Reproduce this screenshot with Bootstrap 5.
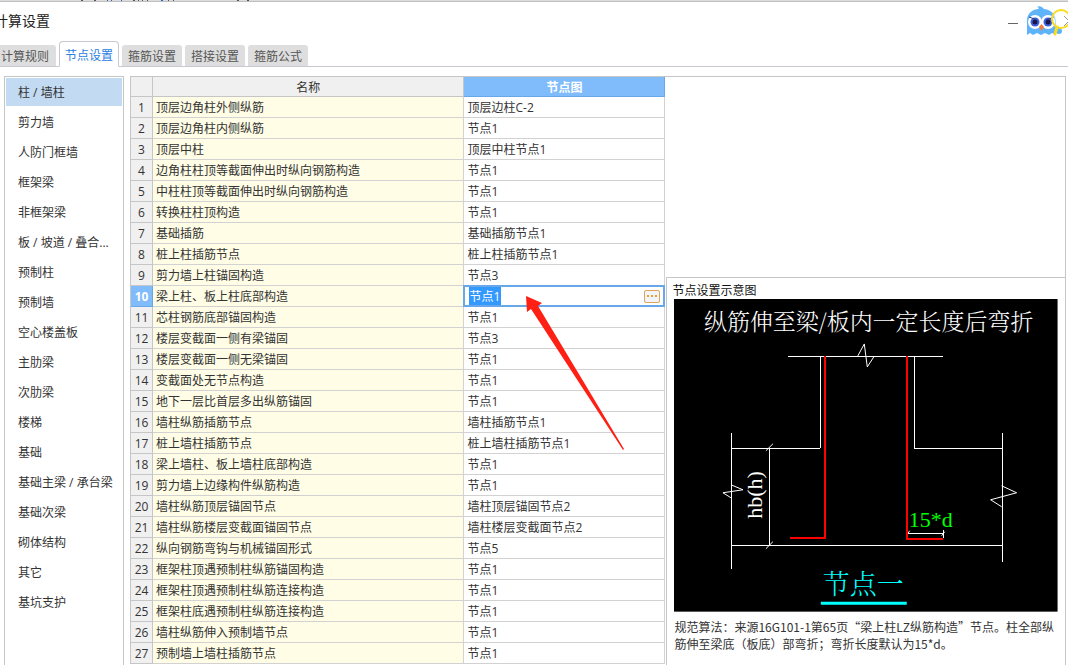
<!DOCTYPE html>
<html lang="zh-CN">
<head>
<meta charset="utf-8">
<meta name="viewport" content="width=device-width, initial-scale=1">
<title>计算设置</title>
<link href="https://cdn.jsdelivr.net/npm/bootstrap@5.3.0/dist/css/bootstrap.min.css" rel="stylesheet">
<style>
body { font-family: "Open Sans", "Noto Sans CJK SC", sans-serif; font-size: 12px; line-height: 17px; color: #333; background: #fff; }
.edge-strip { height: 2px; background: #dcdcdc; border-bottom: 1px solid #c0c0c0; }
.edge-strip svg { height: 1px; width: 260px; }
.title-bar { height: 39px; }
.title-bar h1 { font-size: 14px; line-height: 20px; margin: 0 0 2px -6px; font-weight: 400; color: #222; }
.min-btn { width: 10px; height: 10px; border: 0; padding: 0; background: none; }
.owl { width: 42px; height: 32px; }
.calc-tabs { height: 26px; border-bottom: 1px solid #c8c8d0; gap: 3px; }
.calc-tabs .nav-link { height: 21px; padding: 3px 6px 1px; border: 0; border-radius: 3px 3px 0 0; background: #dedede; color: #555; margin: 0; white-space: nowrap; }
.calc-tabs .nav-item:first-child .nav-link { padding-left: 1px; padding-right: 7px; border-top-left-radius: 0; }
.calc-tabs .nav-link.active { height: 26px; padding: 5px 5px 3px; border: 1px solid #c8c8d0; border-bottom-color: #fff; background: #fff; color: #2a7de1; margin-bottom: -1px; border-radius: 4px 4px 0 0; }
.work-area { padding: 9px 2px 0 4px; min-height: 0; }
.member-list { width: 120px; margin-right: 6px; padding: 1px; gap: 2px; border: 1px solid #c6c6c6; border-bottom: 0; }
.member-list a { height: 28px; padding: 6px 4px 5px 12px; color: #333; text-decoration: none; }
.member-list a.active { background: #c2daf2; }
.grid-pane { flex: 536 1 0; min-width: 0; }
.preview-pane { flex: 400 1 0; min-width: 0; border: 1px solid #c6c6c6; border-width: 1px 1px 0 0; }
.node-grid { width: 100%; table-layout: fixed; border-collapse: separate; border-spacing: 0; border: 1px solid #c6c6c6; border-width: 1px 0 0 1px; }
.node-grid th, .node-grid td { height: 21px; padding: 2px 3px 1px; border: 0 solid #d2d2d2; border-width: 0 1px 1px 0; white-space: nowrap; overflow: hidden; font-weight: 400; }
.node-grid thead th { height: 20px; padding: 2px 1px 0; background: #f0f0f0; text-align: center; border-color: #c6c6c6; }
.node-grid tbody th { background: #f0f0f0; text-align: center; padding-left: 0; padding-right: 0; border-color: #c6c6c6; }
.node-grid .item-name { background: #fffde6; }
.node-grid thead th.picked, .node-grid tbody th.picked { background: #80bcfb; border-color: #68a8ea; color: #fff; font-weight: 700; }
.node-grid td.edit-cell { overflow: visible; padding: 0; position: relative; }
.edit-box { height: 20px; outline: 2px solid #68a8ea; outline-offset: -1px; padding: 0 4px 0 5px; background: #fff; }
.edit-box input { width: 32px; height: 18px; border: 0; padding: 0; background: #3399ff; color: #fff; border-radius: 0; font-size: 12px; }
.more-btn { width: 16px; height: 13px; padding: 0; border: 1px solid #e2a15c; border-radius: 2px; background: #f1f4f8; }
.more-btn svg { display: block; }
.pointer-arrow { position: absolute; left: 61px; top: 6px; width: 101px; height: 158px; pointer-events: none; z-index: 2; }
.blank-view { height: 200px; }
.node-view { margin-left: 1px; padding: 4px 7px 0; border: 1px solid #c6c6c6; border-width: 1px 0 0 1px; }
.node-view h2 { font-size: 12px; line-height: 17px; font-weight: 400; margin: 0 0 0 -2px; color: #111; }
.node-view p { padding-top: 6px; font-family: "Noto Sans CJK SC", sans-serif; }
.cad { font-family: "Noto Serif CJK SC", "Noto Sans CJK SC", sans-serif; font-weight: 300; }
.cad-latin { font-family: "Liberation Serif", serif; }
</style>
</head>
<body>
<div class="vh-100 d-flex flex-column overflow-hidden">
  <div class="edge-strip d-flex flex-shrink-0"><svg viewBox="0 0 260 1" aria-hidden="true"><path d="M81 .5h2M94 .5h2M107 .5h1M133 .5h2M138 .5h1M142 .5h1M147 .5h1M168 .5h1M173 .5h1M237 .5h2M247 .5h2" stroke="#555"/><path d="M111 .5h1M121 .5h1M161 .5h2" stroke="#2a62b8"/></svg></div>
  <header class="title-bar d-flex align-items-center justify-content-between flex-shrink-0">
    <h1>计算设置</h1>
    <div class="d-flex align-items-center gap-2">
      <button class="min-btn d-flex align-items-center" type="button" aria-label="最小化"><svg width="10" height="10"><path d="M0 6.500H10" stroke="#666"/></svg></button>
      <svg class="owl" viewBox="0 0 42 32" role="img" aria-label="助手">
        <path d="M1 15C1 8 5 4 12 3Q14 2 11 1Q15 -1 18 3C26 4 30 9 30 17V29L26 27L23 29L19 27L15 29L11 27L7 29L4 27L1 29Z" fill="#5eb3f9"/>
        <circle cx="33" cy="25" r="3" fill="#5eb3f9"/>
        <circle cx="9" cy="16" r="7" fill="#fff"/><circle cx="22" cy="16" r="7" fill="#fff"/>
        <circle cx="9" cy="16" r="4.500" fill="#3d62dc"/><circle cx="22" cy="16" r="4.500" fill="#3d62dc"/>
        <circle cx="9" cy="16" r="2.500" fill="#1b1650"/><circle cx="22" cy="16" r="2.500" fill="#1b1650"/>
        <path d="M3 11L11 14M28 11L20 14" stroke="#2c3f8c"/>
        <path d="M15.500 18L18 21L15.500 25L13 21Z" fill="#f47b3a"/>
        <circle cx="35" cy="13" r="9" fill="#fff" fill-opacity=".5" stroke="#fbdc22" stroke-width="2"/>
        <path d="M31 21L29 28" stroke="#fbdc22" stroke-width="3" stroke-linecap="round"/>
        <path d="M38 10L42 14M38 20L42 16" stroke="#999"/>
      </svg>
    </div>
  </header>
  <ul class="calc-tabs nav flex-nowrap align-items-end flex-shrink-0">
    <li class="nav-item"><a class="nav-link" href="#">计算规则</a></li>
    <li class="nav-item"><a class="nav-link active" href="#" aria-current="page">节点设置</a></li>
    <li class="nav-item"><a class="nav-link" href="#">箍筋设置</a></li>
    <li class="nav-item"><a class="nav-link" href="#">搭接设置</a></li>
    <li class="nav-item"><a class="nav-link" href="#">箍筋公式</a></li>
  </ul>
  <main class="work-area d-flex flex-fill">
    <nav class="member-list d-flex flex-column flex-shrink-0">
      <a class="active text-truncate" href="#">柱 / 墙柱</a>
      <a class="text-truncate" href="#">剪力墙</a>
      <a class="text-truncate" href="#">人防门框墙</a>
      <a class="text-truncate" href="#">框架梁</a>
      <a class="text-truncate" href="#">非框架梁</a>
      <a class="text-truncate" href="#">板 / 坡道 / 叠合...</a>
      <a class="text-truncate" href="#">预制柱</a>
      <a class="text-truncate" href="#">预制墙</a>
      <a class="text-truncate" href="#">空心楼盖板</a>
      <a class="text-truncate" href="#">主肋梁</a>
      <a class="text-truncate" href="#">次肋梁</a>
      <a class="text-truncate" href="#">楼梯</a>
      <a class="text-truncate" href="#">基础</a>
      <a class="text-truncate" href="#">基础主梁 / 承台梁</a>
      <a class="text-truncate" href="#">基础次梁</a>
      <a class="text-truncate" href="#">砌体结构</a>
      <a class="text-truncate" href="#">其它</a>
      <a class="text-truncate" href="#">基坑支护</a>
    </nav>
    <section class="grid-pane">
      <table class="node-grid">
        <colgroup><col style="width:22px"><col><col style="width:37.6%"></colgroup>
        <thead><tr><th></th><th scope="col">名称</th><th scope="col" class="picked">节点图</th></tr></thead>
        <tbody>
          <tr><th scope="row">1</th><td class="item-name">顶层边角柱外侧纵筋</td><td>顶层边柱C-2</td></tr>
          <tr><th scope="row">2</th><td class="item-name">顶层边角柱内侧纵筋</td><td>节点1</td></tr>
          <tr><th scope="row">3</th><td class="item-name">顶层中柱</td><td>顶层中柱节点1</td></tr>
          <tr><th scope="row">4</th><td class="item-name">边角柱柱顶等截面伸出时纵向钢筋构造</td><td>节点1</td></tr>
          <tr><th scope="row">5</th><td class="item-name">中柱柱顶等截面伸出时纵向钢筋构造</td><td>节点1</td></tr>
          <tr><th scope="row">6</th><td class="item-name">转换柱柱顶构造</td><td>节点1</td></tr>
          <tr><th scope="row">7</th><td class="item-name">基础插筋</td><td>基础插筋节点1</td></tr>
          <tr><th scope="row">8</th><td class="item-name">桩上柱插筋节点</td><td>桩上柱插筋节点1</td></tr>
          <tr><th scope="row">9</th><td class="item-name">剪力墙上柱锚固构造</td><td>节点3</td></tr>
          <tr><th scope="row" class="picked">10</th><td class="item-name">梁上柱、板上柱底部构造</td><td class="edit-cell">
            <div class="edit-box d-flex align-items-center justify-content-between">
              <input type="text" value="节点1" aria-label="节点图">
              <button class="more-btn" type="button" aria-label="更多"><svg width="14" height="11"><path d="M2 4h2v2h-2zM6 4h2v2h-2zM10 4h2v2h-2z" fill="#f0a030"/></svg></button>
            </div>
            <svg class="pointer-arrow" viewBox="0 0 101 158"><path d="M1 4L17 11L13 14L99 157L98 158L6 17L2 20Z" fill="#ff2015"/></svg>
          </td></tr>
          <tr><th scope="row">11</th><td class="item-name">芯柱钢筋底部锚固构造</td><td>节点1</td></tr>
          <tr><th scope="row">12</th><td class="item-name">楼层变截面一侧有梁锚固</td><td>节点3</td></tr>
          <tr><th scope="row">13</th><td class="item-name">楼层变截面一侧无梁锚固</td><td>节点1</td></tr>
          <tr><th scope="row">14</th><td class="item-name">变截面处无节点构造</td><td>节点1</td></tr>
          <tr><th scope="row">15</th><td class="item-name">地下一层比首层多出纵筋锚固</td><td>节点1</td></tr>
          <tr><th scope="row">16</th><td class="item-name">墙柱纵筋插筋节点</td><td>墙柱插筋节点1</td></tr>
          <tr><th scope="row">17</th><td class="item-name">桩上墙柱插筋节点</td><td>桩上墙柱插筋节点1</td></tr>
          <tr><th scope="row">18</th><td class="item-name">梁上墙柱、板上墙柱底部构造</td><td>节点1</td></tr>
          <tr><th scope="row">19</th><td class="item-name">剪力墙上边缘构件纵筋构造</td><td>节点1</td></tr>
          <tr><th scope="row">20</th><td class="item-name">墙柱纵筋顶层锚固节点</td><td>墙柱顶层锚固节点2</td></tr>
          <tr><th scope="row">21</th><td class="item-name">墙柱纵筋楼层变截面锚固节点</td><td>墙柱楼层变截面节点2</td></tr>
          <tr><th scope="row">22</th><td class="item-name">纵向钢筋弯钩与机械锚固形式</td><td>节点5</td></tr>
          <tr><th scope="row">23</th><td class="item-name">框架柱顶遇预制柱纵筋锚固构造</td><td>节点1</td></tr>
          <tr><th scope="row">24</th><td class="item-name">框架柱顶遇预制柱纵筋连接构造</td><td>节点1</td></tr>
          <tr><th scope="row">25</th><td class="item-name">框架柱底遇预制柱纵筋连接构造</td><td>节点1</td></tr>
          <tr><th scope="row">26</th><td class="item-name">墙柱纵筋伸入预制墙节点</td><td>节点1</td></tr>
          <tr><th scope="row">27</th><td class="item-name">预制墙上墙柱插筋节点</td><td>节点1</td></tr>
        </tbody>
      </table>
    </section>
    <section class="preview-pane d-flex flex-column">
      <div class="blank-view flex-shrink-0"></div>
      <div class="node-view flex-fill">
        <h2>节点设置示意图</h2>
        <svg class="d-block w-100" viewBox="0 0 384 313">
          <rect width="384" height="313" fill="#000"/>
          <g class="cad">
            <text x="30" y="31" font-size="23" fill="#fff">纵筋伸至梁/板内一定长度后弯折</text>
            <text x="149" y="295" font-size="27" fill="#0ff">节点一</text>
          </g>
          <g class="cad-latin" font-size="22">
            <text transform="translate(88 220) rotate(-90)" fill="#fff">hb(h)</text>
            <text x="235" y="228" fill="#0f0">15*d</text>
          </g>
          <g fill="none" stroke="#fff" shape-rendering="crispEdges">
            <path d="M114 57.500H269M146.500 57V149.500H57M240.500 57V149.500H328M57 246.500H328M57.500 134V270M328.500 134V263M95.500 149V246"/>
            <path d="M234 234.500H270M233.500 232V238M269.500 231V239"/>
          </g>
          <g fill="none" stroke="#fff">
            <path d="M184 57L190.500 45L193.500 68L200 58M92 152L99 145M92 250L99 243M233 236L236 232M268 237L271 233"/>
            <path d="M57 186L69 191L49 194L57 199M328 187L343 194L317 201L328 208"/>
          </g>
          <g fill="none" stroke="#f00" stroke-width="2" shape-rendering="crispEdges">
            <path d="M151 57V239H116M233 57V240H269"/>
          </g>
          <path d="M147 304.500H233" stroke="#0ff" stroke-width="3"/>
        </svg>
        <p class="mb-0">规范算法：来源16G101-1第65页“梁上柱LZ纵筋构造”节点。柱全部纵筋伸至梁底（板底）部弯折；弯折长度默认为15*d。</p>
      </div>
    </section>
  </main>
</div>
<script src="https://cdn.jsdelivr.net/npm/bootstrap@5.3.0/dist/js/bootstrap.bundle.min.js"></script>
</body>
</html>
